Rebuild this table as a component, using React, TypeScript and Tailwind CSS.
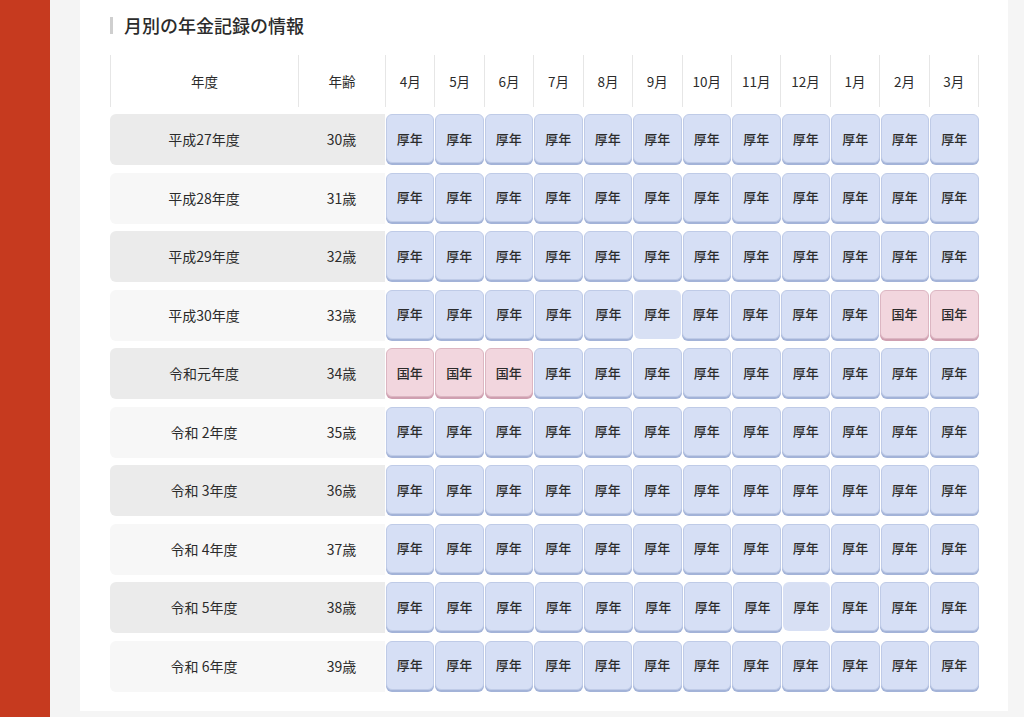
const months = ["4月", "5月", "6月", "7月", "8月", "9月", "10月", "11月", "12月", "1月", "2月", "3月"];

type Cell = "k" | "n" | "f";

type Row = { year: string; age: string; cells: Cell[] };

const all = (c: Cell): Cell[] => Array.from({ length: 12 }, () => c);

const rows: Row[] = [
  { year: "平成27年度", age: "30歳", cells: all("k") },
  { year: "平成28年度", age: "31歳", cells: all("k") },
  { year: "平成29年度", age: "32歳", cells: all("k") },
  {
    year: "平成30年度",
    age: "33歳",
    cells: ["k", "k", "k", "k", "k", "f", "k", "k", "k", "k", "n", "n"],
  },
  {
    year: "令和元年度",
    age: "34歳",
    cells: ["n", "n", "n", "k", "k", "k", "k", "k", "k", "k", "k", "k"],
  },
  { year: "令和 2年度", age: "35歳", cells: all("k") },
  { year: "令和 3年度", age: "36歳", cells: all("k") },
  { year: "令和 4年度", age: "37歳", cells: all("k") },
  {
    year: "令和 5年度",
    age: "38歳",
    cells: ["k", "k", "k", "k", "k", "k", "k", "k", "f", "k", "k", "k"],
  },
  { year: "令和 6年度", age: "39歳", cells: all("k") },
];

function MonthCell({ type }: { type: Cell }) {
  if (type === "n") {
    return (
      <div className="mx-[0.5px] flex h-[49px] flex-1 items-center justify-center rounded-[6px] border border-[#dcb6c2] bg-[#f2d6de] text-[13px] font-medium text-[#2b2b2b] shadow-[0_2px_0_#cf9fb0]">
        国年
      </div>
    );
  }
  if (type === "f") {
    return (
      <div className="mx-[0.5px] flex h-[49px] flex-1 items-center justify-center rounded-[6px] bg-[#d8e0f4] text-[13px] font-medium text-[#2b2b2b]">
        厚年
      </div>
    );
  }
  return (
    <div className="mx-[0.5px] flex h-[49px] flex-1 items-center justify-center rounded-[6px] border border-[#bfcbe7] bg-[#d6dff5] text-[13px] font-medium text-[#2b2b2b] shadow-[0_2px_0_#a3b3d8]">
      厚年
    </div>
  );
}

export default function App() {
  return (
    <div
      className="flex h-[717px] w-[1024px] overflow-hidden bg-[#f5f5f5] text-[#2b2b2b]"
      style={{ fontFamily: '"Noto Sans CJK JP", "Noto Sans", sans-serif' }}
    >
      <div className="w-[50px] shrink-0 bg-[#c63a1f]" />
      <div className="w-[30px] shrink-0 bg-[#f4f4f4]" />
      <main className="h-[711px] w-[928px] shrink-0 bg-white pl-[30px] pt-[15px]">
        <h2 className="flex items-center gap-[11px] text-[18px] font-medium leading-[20px] text-[#2b2b2b]">
          <span className="h-[17px] w-[3px] bg-[#cfcfcf]" />
          月別の年金記録の情報
        </h2>

        <div className="mt-[20px] w-[869px]">
          <div className="flex h-[52px] text-[13.5px]">
            <div className="flex w-[188px] items-center justify-center border-l border-[#e6e6e6]">年度</div>
            <div className="flex w-[87px] items-center justify-center border-l border-[#e6e6e6]">年齢</div>
            {months.map((m, i) => (
              <div
                key={m}
                className={
                  i === months.length - 1
                    ? "flex flex-1 items-center justify-center border-x border-[#e6e6e6]"
                    : "flex flex-1 items-center justify-center border-l border-[#e6e6e6]"
                }
              >
                {m}
              </div>
            ))}
          </div>

          <div className="mt-[7px] flex flex-col gap-[6.5px]">
            {rows.map((row, i) => (
              <div key={row.year} className="flex h-[52px]">
                <div
                  className={
                    i % 2 === 0
                      ? "flex h-[51px] w-[275px] rounded-l-[6px] bg-[#ebebeb] text-[14px]"
                      : "flex h-[51px] w-[275px] rounded-l-[6px] bg-[#f7f7f7] text-[14px]"
                  }
                >
                  <div className="flex w-[188px] items-center justify-center whitespace-pre">{row.year}</div>
                  <div className="flex w-[87px] items-center justify-center">{row.age}</div>
                </div>
                <div className="flex flex-1 items-start">
                  {row.cells.map((c, j) => (
                    <MonthCell key={j} type={c} />
                  ))}
                </div>
              </div>
            ))}
          </div>
        </div>
      </main>
    </div>
  );
}
